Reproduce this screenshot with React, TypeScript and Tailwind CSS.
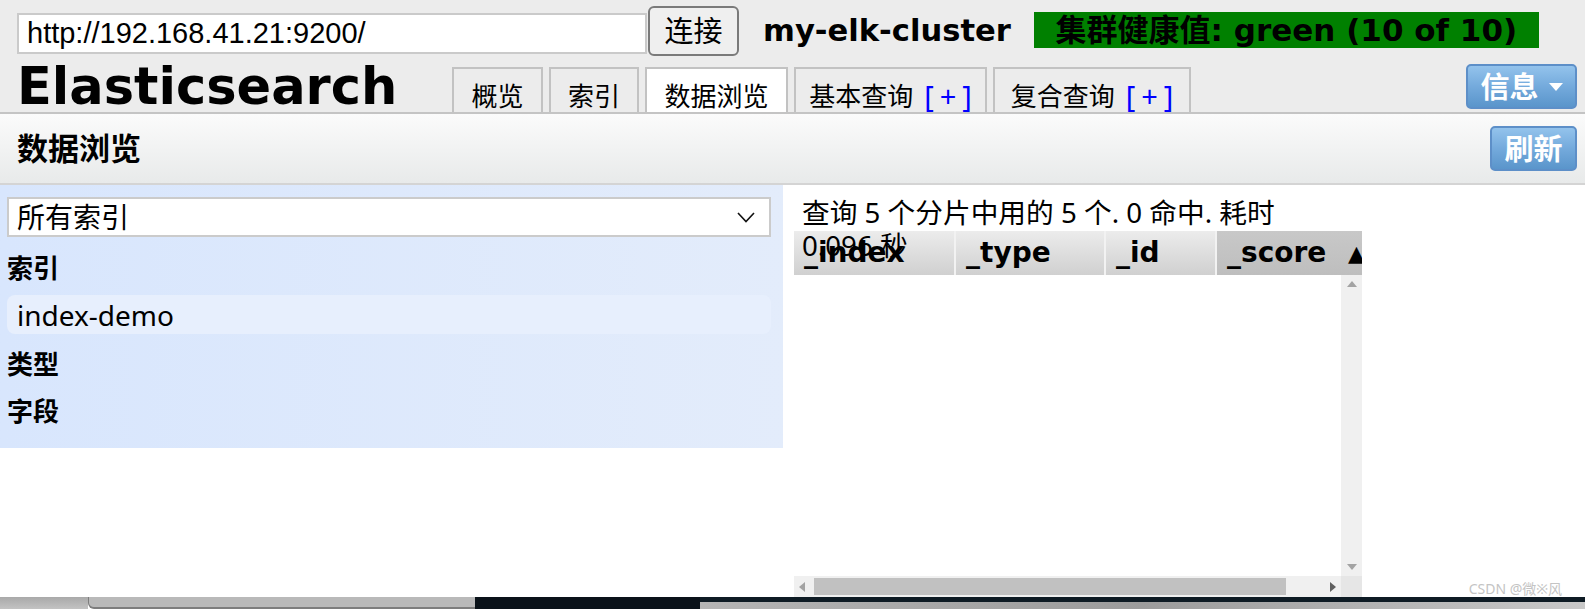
import React from 'react';

const sans = "font-['Noto_Sans','Noto_Sans_CJK_SC',sans-serif]";
const verdana = "font-['DejaVu_Sans','Noto_Sans_CJK_SC',sans-serif]";
const arial = "font-['Liberation_Sans','Noto_Sans_CJK_SC',sans-serif]";

type Tab = { label: string; width: string; active?: boolean; plus?: boolean };

const tabs: Tab[] = [
  { label: '概览', width: 'w-[91px]' },
  { label: '索引', width: 'w-[90px]' },
  { label: '数据浏览', width: 'w-[143px]', active: true },
  { label: '基本查询', width: 'w-[193px]', plus: true },
  { label: '复合查询', width: 'w-[198px]', plus: true },
];

type Column = { name: string; width: string; sorted?: boolean };

const columns: Column[] = [
  { name: '_index', width: 'w-[160px]' },
  { name: '_type', width: 'w-[150px]' },
  { name: '_id', width: 'w-[111px]' },
  { name: '_score', width: 'w-[150px]', sorted: true },
];

const BlueButton = ({ children, width }: { children: React.ReactNode; width: string }) => (
  <div
    className={`${width} h-[45px] shrink-0 rounded-[5px] border-2 border-[#5d8fc8] bg-gradient-to-b from-[#93c3ec] via-[#74aadc] to-[#5a95cb] flex items-center justify-center gap-[10px] text-white font-bold text-[29px] leading-none ${sans}`}
  >
    {children}
  </div>
);

const App = () => {
  return (
    <div className={`relative w-[1585px] h-[609px] overflow-hidden flex flex-col bg-white text-black ${sans}`}>
      {/* top bar */}
      <header className="h-[114px] shrink-0 bg-[#ececec] border-b-2 border-[#c4c4c4] pl-[17px] pr-[8px] flex flex-col">
        <div className="h-[56px] pt-[6px] flex items-start">
          <div className={`mt-[7px] w-[630px] h-[41px] border-2 border-[#cacaca] bg-white pl-[8px] flex items-center text-[29px] ${arial}`}>
            http://192.168.41.21:9200/
          </div>
          <div className="ml-[1px] w-[91px] h-[50px] rounded-[6px] border-2 border-[#7a7a7a] bg-[#efefef] flex items-center justify-center text-[29px]">
            连接
          </div>
          <div className={`ml-[24px] h-[50px] flex items-center text-[30.6px] font-bold ${verdana}`}>my-elk-cluster</div>
          <div className={`ml-[23px] mt-[6px] w-[505px] h-[36px] bg-[#008000] flex items-center justify-center text-[31px] font-bold leading-none ${verdana}`}>
            集群健康值: green (10 of 10)
          </div>
        </div>
        <div className="flex-1 flex items-end">
          <h1 className={`w-[435px] self-center mt-[4px] text-[51px] font-bold leading-none ${verdana}`}>Elasticsearch</h1>
          <div className="flex items-end gap-[6px]">
            {tabs.map((t) => (
              <div
                key={t.label}
                className={`${t.width} h-[45px] border-2 border-b-0 border-[#c2c2c2] flex justify-center pt-[11px] text-[26px] leading-[32px] ${
                  t.active ? 'bg-white' : 'bg-[#ececec]'
                }`}
              >
                <span>{t.label}</span>
                {t.plus && (
                  <span className="ml-[11px] -mr-[6px] tracking-[6px] text-[29px] text-[#0000ff]">[+]</span>
                )}
              </div>
            ))}
          </div>
          <div className="ml-auto self-start mt-[8px]">
            <BlueButton width="w-[111px]">
              <span>信息</span>
              <svg width="14" height="8" viewBox="0 0 14 8">
                <path d="M0 0 L14 0 L7 8 Z" fill="#ffffff" />
              </svg>
            </BlueButton>
          </div>
        </div>
      </header>

      {/* section title */}
      <div className="h-[71px] shrink-0 bg-gradient-to-b from-[#fbfbfb] to-[#e8eaea] border-b-2 border-[#d4d4d4] pl-[17px] pr-[8px] flex items-center">
        <div className="text-[31px] font-bold">数据浏览</div>
        <div className="ml-auto">
          <BlueButton width="w-[87px]">刷新</BlueButton>
        </div>
      </div>

      {/* body */}
      <div className="relative flex-1 flex items-start">
        <aside className="w-[783px] shrink-0 bg-gradient-to-r from-[#d8e6fd] to-[#e3ecfb] pl-[7px] pr-[12px] pt-[12px] pb-[20px]">
          <div className="h-[40px] border-2 border-[#cbcbcb] bg-white pl-[8px] pr-[14px] flex items-center text-[28px]">
            <span>所有索引</span>
            <svg className="ml-auto" width="18" height="11" viewBox="0 0 18 11">
              <polyline points="1,1 9,9.5 17,1" fill="none" stroke="#111" strokeWidth="1.6" />
            </svg>
          </div>
          <div className="mt-[14px] text-[26px] font-bold leading-[34px]">索引</div>
          <div className="mt-[10px] h-[39px] rounded-[8px] bg-[#e7effd] pl-[10px] flex items-center text-[28px]">index-demo</div>
          <div className="mt-[13px] text-[26px] font-bold leading-[34px]">类型</div>
          <div className="mt-[13px] text-[26px] font-bold leading-[34px]">字段</div>
        </aside>

        <section className="flex-1 self-stretch flex flex-col">
          <div className="pl-[19px] pt-[11px] h-[46px]">
            <p className="relative z-10 w-[500px] text-[27.7px] leading-[33px]">查询 5 个分片中用的 5 个. 0 命中. 耗时 0.096 秒</p>
          </div>
          <div className="ml-[11px] w-[568px] flex-1 flex flex-col">
            <div className={`h-[44px] shrink-0 flex overflow-hidden text-[28px] font-bold ${verdana}`}>
              {columns.map((c, i) => (
                <div
                  key={c.name}
                  className={`${c.width} shrink-0 flex items-center pl-[10px] ${i > 0 ? 'border-l-2 border-[#f2f2f2]' : ''} ${
                    c.sorted
                      ? 'bg-gradient-to-b from-[#c8c8c8] to-[#bebebe]'
                      : 'bg-gradient-to-b from-[#ececec] to-[#d0d0d0]'
                  }`}
                >
                  <span>{c.name}</span>
                  {c.sorted && <span className="ml-auto text-[22px]">▲</span>}
                </div>
              ))}
            </div>
            <div className="flex-1 flex">
              <div className="flex-1 bg-white" />
              <div className="w-[21px] bg-[#f0f0f0] flex flex-col items-center justify-between py-[6px]">
                <svg width="10" height="6" viewBox="0 0 10 6">
                  <path d="M0 6 L5 0 L10 6 Z" fill="#a3a3a3" />
                </svg>
                <svg width="10" height="6" viewBox="0 0 10 6">
                  <path d="M0 0 L10 0 L5 6 Z" fill="#a3a3a3" />
                </svg>
              </div>
            </div>
            <div className="h-[21px] shrink-0 flex">
              <div className="flex-1 bg-[#f0f0f0] flex items-center px-[5px]">
                <svg width="6" height="10" viewBox="0 0 6 10">
                  <path d="M6 0 L6 10 L0 5 Z" fill="#a3a3a3" />
                </svg>
                <div className="ml-[9px] w-[472px] h-[17px] bg-[#c1c1c1]" />
                <svg className="ml-auto" width="6" height="10" viewBox="0 0 6 10">
                  <path d="M0 0 L6 5 L0 10 Z" fill="#5f5f5f" />
                </svg>
              </div>
              <div className="w-[21px] bg-[#e6e6e6]" />
            </div>
          </div>
        </section>

        <div className="absolute right-[23px] bottom-[1px] text-[14px] leading-none text-[#c4c4c4]">CSDN @微※风</div>
      </div>

      {/* desktop strip under the window */}
      <div className="h-[12px] shrink-0 flex">
        <div className="w-[88px] bg-gradient-to-b from-[#a9a9a9] to-[#c3c3c3]" />
        <div className="w-[387px] bg-[#b9b9b9] border-l border-b-2 border-[#7d7d7d] rounded-bl-[6px]" />
        <div className="w-[225px] bg-[#0a1219]" />
        <div className="flex-1 flex flex-col">
          <div className="h-[5px] bg-[#0e1b24]" />
          <div className="flex-1 bg-gradient-to-r from-[#b5b5b5] via-[#9c9c9c] to-[#c9c9c9]" />
        </div>
      </div>
    </div>
  );
};

export default App;
